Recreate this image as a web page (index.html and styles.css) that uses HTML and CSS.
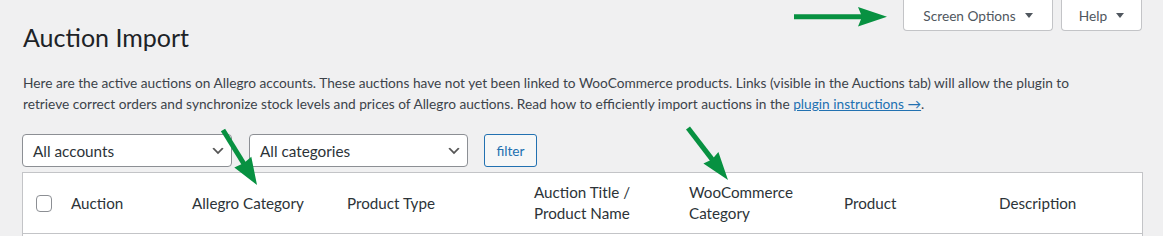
FILE: index.html
```html
<!DOCTYPE html>
<html lang="en">
<head>
<meta charset="utf-8">
<title>Auction Import</title>
<link rel="stylesheet" href="styles.css">
</head>
<body>
<div class="page">
  <header class="top">
    <h1 class="title">Auction Import</h1>
    <nav class="meta-links">
      <button class="meta-tab meta-tab-screen" type="button"><span>Screen Options</span><i class="caret"></i></button>
      <button class="meta-tab meta-tab-help" type="button"><span>Help</span><i class="caret"></i></button>
    </nav>
  </header>

  <p class="intro">Here are the active auctions on Allegro accounts. These auctions have not yet been linked to WooCommerce products. Links (visible in the Auctions tab) will allow the plugin to<br>retrieve correct orders and synchronize stock levels and prices of Allegro auctions. Read how to efficiently import auctions in the <a href="#" class="link">plugin instructions →</a>.</p>

  <div class="filters">
    <div class="select select-accounts">
      <span class="select-text">All accounts</span>
      <svg class="chevron" width="16" height="16" viewBox="0 0 20 20"><path d="M5 6l5 5 5-5 2 1-7 7-7-7 2-1z" fill="#555"/></svg>
    </div>
    <div class="select select-categories">
      <span class="select-text">All categories</span>
      <svg class="chevron" width="16" height="16" viewBox="0 0 20 20"><path d="M5 6l5 5 5-5 2 1-7 7-7-7 2-1z" fill="#555"/></svg>
    </div>
    <button class="btn-filter" type="button">filter</button>
  </div>

  <div class="table">
    <div class="row row-head">
      <div class="cell cell-check"><span class="checkbox"></span></div>
      <div class="cell">Auction</div>
      <div class="cell">Allegro Category</div>
      <div class="cell">Product Type</div>
      <div class="cell">Auction Title /<br>Product Name</div>
      <div class="cell">WooCommerce<br>Category</div>
      <div class="cell">Product</div>
      <div class="cell">Description</div>
    </div>
    <div class="row row-body"></div>
  </div>

  <svg class="annotations" width="1163" height="236" viewBox="0 0 1163 236">
    <g fill="#079141" stroke="#079141">
      <line x1="794" y1="16.7" x2="864" y2="16.7" stroke-width="5"/>
      <polygon points="858,7 887,16.7 858,26.5 862,16.7" stroke="none"/>
      <line x1="223" y1="130" x2="246.5" y2="168" stroke-width="5"/>
      <polygon points="251.3,156.8 257,185 234.3,167.4 244,163" stroke="none"/>
      <line x1="688" y1="128" x2="715.8" y2="164.1" stroke-width="5"/>
      <polygon points="718.4,152 728,180 703.4,163.6 712,159.5" stroke="none"/>
    </g>
  </svg>
</div>
</body>
</html>
```

FILE: styles.css
```css
* { box-sizing: border-box; }

html, body {
  margin: 0;
  padding: 0;
}

body {
  background: #f0f0f1;
  font-family: Lato, "Noto Sans", sans-serif;
  color: #3c434a;
}

.page {
  position: relative;
  width: 1163px;
  height: 236px;
  overflow: hidden;
}

.top {
  display: flex;
  justify-content: space-between;
  align-items: flex-start;
  padding: 0 21px 0 23px;
}

.title {
  margin: 22px 0 0;
  font-size: 25px;
  line-height: 30px;
  font-weight: 400;
  color: #1d2327;
}

.meta-links {
  display: flex;
  gap: 8px;
}

.meta-tab {
  height: 31px;
  display: flex;
  align-items: center;
  justify-content: center;
  gap: 9px;
  padding: 0;
  background: #fff;
  border: 1px solid #c3c4c7;
  border-top: none;
  border-radius: 0 0 4px 4px;
  font-family: inherit;
  font-size: 13.7px;
  color: #50575e;
}

.meta-tab-screen { width: 150px; }
.meta-tab-help { width: 81px; }

.caret {
  width: 0;
  height: 0;
  border-left: 4px solid transparent;
  border-right: 4px solid transparent;
  border-top: 5px solid #50575e;
  margin-top: 1px;
}

.intro {
  margin: 20px 23px 0;
  font-size: 13.7px;
  line-height: 21px;
  color: #3c434a;
}

.link {
  color: #2271b1;
  text-decoration: underline;
}

.filters {
  display: flex;
  gap: 16px;
  margin: 20px 0 0 22px;
  height: 33px;
}

.select {
  display: flex;
  align-items: center;
  justify-content: space-between;
  height: 33px;
  padding: 0 5px 0 10px;
  background: #fff;
  border: 1px solid #8c8f94;
  border-radius: 4px;
  font-size: 15.3px;
  color: #2c3338;
}

.select-accounts { width: 210px; margin-right: 1px; }
.select-categories { width: 219px; }

.chevron {
  margin-top: 1px;
  flex: none;
}

.btn-filter {
  width: 53px;
  height: 33px;
  padding: 0;
  background: #f6f7f7;
  border: 1px solid #2271b1;
  border-radius: 3px;
  font-family: inherit;
  font-size: 13.7px;
  color: #2271b1;
}

.table {
  margin: 5px 20px 0 22px;
  background: #fff;
  border: 1px solid #c3c4c7;
  border-bottom: none;
}

.row-head {
  display: grid;
  grid-template-columns: 38px 121px 155px 187px 155px 155px 155px 1fr;
  align-items: center;
  height: 61px;
  border-bottom: 1px solid #c3c4c7;
}

.cell {
  padding: 0 10px;
  font-size: 15.2px;
  line-height: 21px;
  color: #2c3338;
}

.cell-check {
  padding: 0 0 0 13px;
  display: flex;
  align-items: center;
}

.checkbox {
  display: block;
  width: 16px;
  height: 17px;
  background: #fff;
  border: 1px solid #8c8f94;
  border-radius: 4px;
}

.row-body {
  height: 40px;
}

.annotations {
  position: absolute;
  top: 0;
  left: 0;
  pointer-events: none;
}
```
